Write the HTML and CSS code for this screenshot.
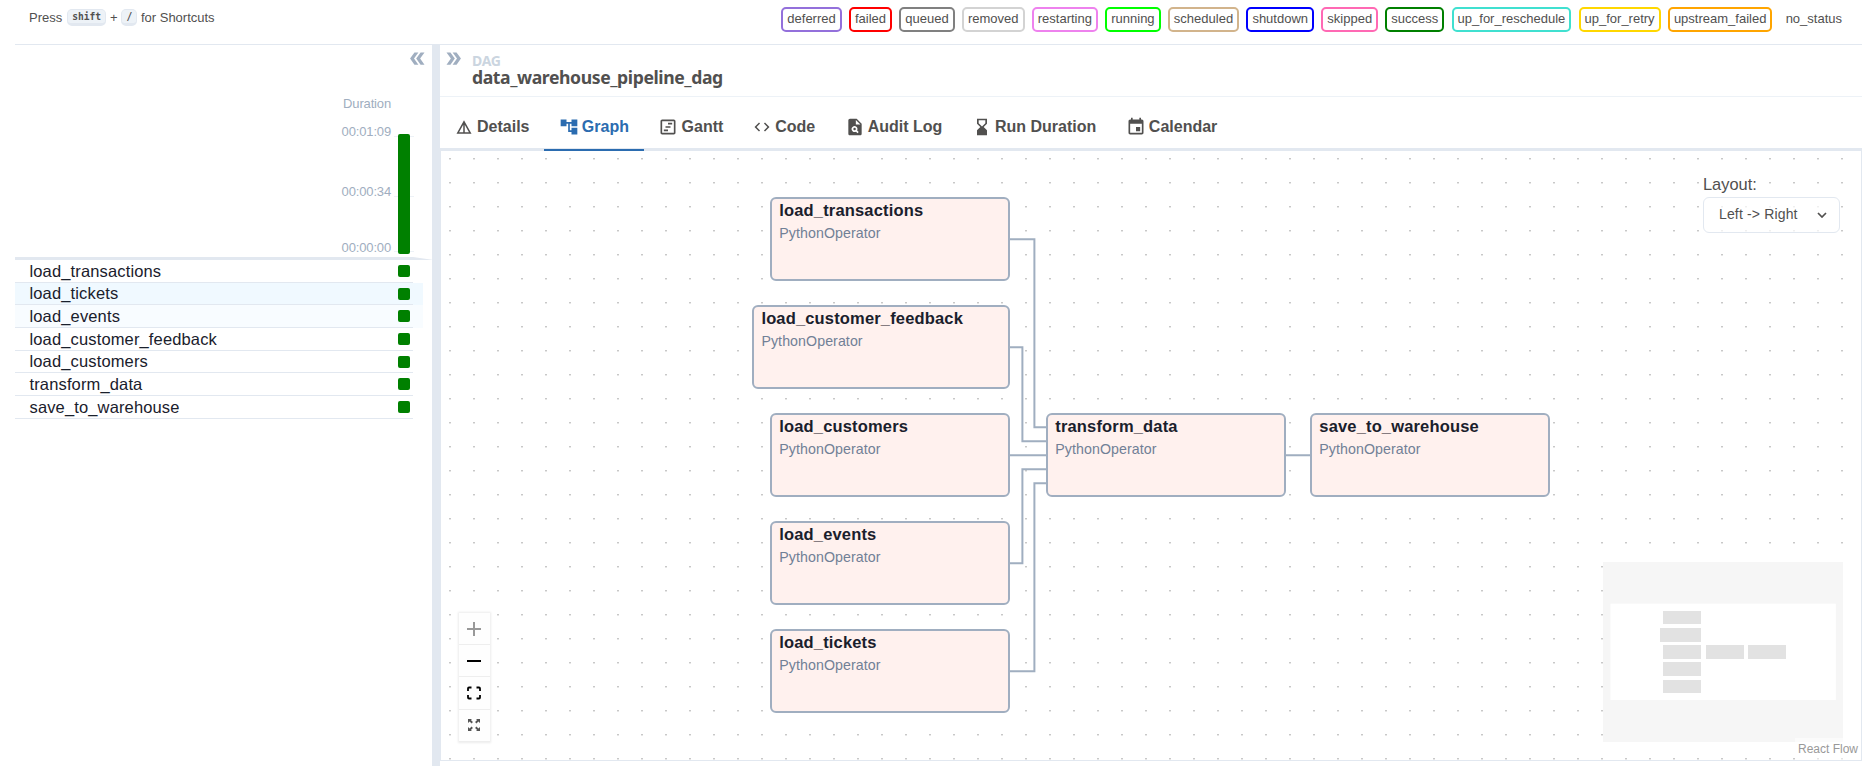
FILE: index.html
```html
<!DOCTYPE html>
<html lang="en">
<head>
<meta charset="utf-8">
<title>data_warehouse_pipeline_dag</title>
<link rel="stylesheet" href="styles.css">
</head>
<body>
<header class="topbar">
  <div class="shortcuts"><span class="press">Press</span><kbd>shift</kbd><span class="plus">+</span><kbd>/</kbd><span class="hint">for Shortcuts</span></div>
  <div class="legend">
    <span class="state deferred">deferred</span>
    <span class="state failed">failed</span>
    <span class="state queued">queued</span>
    <span class="state removed">removed</span>
    <span class="state restarting">restarting</span>
    <span class="state running">running</span>
    <span class="state scheduled">scheduled</span>
    <span class="state shutdown">shutdown</span>
    <span class="state skipped">skipped</span>
    <span class="state success">success</span>
    <span class="state reschedule">up_for_reschedule</span>
    <span class="state retry">up_for_retry</span>
    <span class="state upstream">upstream_failed</span>
    <span class="state none">no_status</span>
  </div>
</header>
<main class="main">
  <section class="grid-panel">
    <div class="collapse"><svg class="double flip" viewBox="0 0 24 24"><path d="M15.5 5H11l5 7-5 7h4.5l5-7zM8.5 5H4l5 7-5 7h4.5l5-7z"/></svg></div>
    <div class="durations">
      <div class="axis">
        <span class="axis-title">Duration</span>
        <span class="max">00:01:09</span>
        <span class="mid">00:00:34</span>
        <span class="min">00:00:00</span>
      </div>
      <div class="chart">
        <i class="tick t1"></i><i class="tick t2"></i><i class="tick t3"></i>
        <div class="bar"></div>
      </div>
    </div>
    <div class="rule"></div>
    <div class="tasks">
      <div class="task"><span>load_transactions</span><i></i></div>
      <div class="task hovered"><span>load_tickets</span><i></i></div>
      <div class="task fading"><span>load_events</span><i></i></div>
      <div class="task"><span>load_customer_feedback</span><i></i></div>
      <div class="task"><span>load_customers</span><i></i></div>
      <div class="task"><span>transform_data</span><i></i></div>
      <div class="task"><span>save_to_warehouse</span><i></i></div>
    </div>
  </section>
  <div class="splitter"></div>
  <section class="details">
    <div class="heading">
      <svg class="double" viewBox="0 0 24 24"><path d="M15.5 5H11l5 7-5 7h4.5l5-7zM8.5 5H4l5 7-5 7h4.5l5-7z"/></svg>
      <div class="heading-text"><span class="kind">DAG</span><span class="dag">data_warehouse_pipeline_dag</span></div>
    </div>
    <nav class="tabs">
      <a class="tab small"><svg viewBox="0 0 24 24"><path d="M12 3L2 21h20L12 3zm1 5.92L18.6 19H13V8.92zm-2 0V19H5.4L11 8.92z"/></svg>Details</a>
      <a class="tab active"><svg viewBox="0 0 24 24"><path d="M22 11V3h-7v3H9V3H2v8h7V8h2v10h4v3h7v-8h-7v3h-2V8h2v3z"/></svg>Graph</a>
      <a class="tab"><svg viewBox="0 0 24 24"><path d="M19 5v14H5V5h14m0-2H5c-1.1 0-2 .9-2 2v14c0 1.1.9 2 2 2h14c1.1 0 2-.9 2-2V5c0-1.1-.9-2-2-2zM7 15h5v2H7zm5-8h5v2h-5zm-3 4h6v2H9z"/></svg>Gantt</a>
      <a class="tab small"><svg viewBox="0 0 24 24"><path d="M9.4 16.6L4.8 12l4.6-4.6L8 6l-6 6 6 6 1.4-1.4zm5.2 0l4.6-4.6-4.6-4.6L16 6l6 6-6 6-1.4-1.4z"/></svg>Code</a>
      <a class="tab"><svg viewBox="0 0 24 24"><path fill-rule="evenodd" d="M14 2H6c-1.1 0-2 .9-2 2v16c0 1.1.89 2 1.99 2H18c1.1 0 2-.9 2-2V8l-6-6zm1.04 17.45l-1.88-1.88c-1.33.71-3.01.53-4.13-.59a3.5 3.5 0 0 1 0-4.95 3.5 3.5 0 0 1 4.95 0c1.12 1.12 1.31 2.8.59 4.13l1.88 1.88-1.41 1.41zM13 9V3.5L18.5 9H13zM11.5 13a1.5 1.5 0 1 0 0 3 1.5 1.5 0 0 0 0-3z"/></svg>Audit Log</a>
      <a class="tab"><svg viewBox="0 0 24 24"><path d="M18 22l-.01-6L14 12l3.99-4.01L18 2H6v6l4 4-4 3.99V22h12zM8 7.5V4h8v3.5l-4 4-4-4z"/></svg>Run Duration</a>
      <a class="tab"><svg viewBox="0 0 24 24"><path d="M17 12h-5v5h5v-5zM16 1v2H8V1H6v2H5c-1.11 0-1.99.9-1.99 2L3 19c0 1.1.89 2 2 2h14c1.1 0 2-.9 2-2V5c0-1.1-.9-2-2-2h-1V1h-2zm3 18H5V8h14v11z"/></svg>Calendar</a>
    </nav>
    <div class="canvas">
      <svg class="layer" width="1420" height="609">
        <defs><pattern id="dots" x="8" y="7" width="24" height="24" patternUnits="userSpaceOnUse"><rect width="2" height="1" fill="#c8c8c8"/><rect y="1" width="2" height="1" fill="#e6e6e6"/></pattern></defs>
        <rect width="1420" height="609" fill="url(#dots)"/>
      </svg>
      <div class="node n1"><b>load_transactions</b><span>PythonOperator</span></div>
      <div class="node n2"><b>load_customer_feedback</b><span>PythonOperator</span></div>
      <div class="node n3"><b>load_customers</b><span>PythonOperator</span></div>
      <div class="node n4"><b>load_events</b><span>PythonOperator</span></div>
      <div class="node n5"><b>load_tickets</b><span>PythonOperator</span></div>
      <div class="node n6"><b>transform_data</b><span>PythonOperator</span></div>
      <div class="node n7"><b>save_to_warehouse</b><span>PythonOperator</span></div>
      <svg class="layer edges" width="1420" height="609">
        <path d="M569 88.3H593.4V276.2H606M569 196.3H581.4V290.2H606M569 304.2H606M569 412.2H581.4V318.2H606M569 520.2H593.4V332.2H606M845 304.2H870"/>
      </svg>
      <div class="layout-picker">
        <label>Layout:</label>
        <div class="select"><span>Left -&gt; Right</span><svg viewBox="0 0 10 6"><path d="M1 1l4 4 4-4"/></svg></div>
      </div>
      <div class="controls">
        <button class="dim"><svg viewBox="0 0 14 14"><path d="M6 0h2v6h6v2H8v6H6V8H0V6h6z"/></svg></button>
        <button><svg viewBox="0 0 14 14"><path d="M0 6h14v2H0z"/></svg></button>
        <button><svg viewBox="0 0 14 14"><path class="line" d="M1 5V2.5Q1 1.5 2 1.5H4.5M9.5 1.5H12Q13 1.5 13 2.5V5M13 9V11.5Q13 12.5 12 12.5H9.5M4.5 12.5H2Q1 12.5 1 11.5V9"/></svg></button>
        <button class="soft"><svg viewBox="0 0 14 14"><path d="M1 1h4L3.9 2.1l2 2-1.3 1.3-2-2L1 5zM13 1H9l1.1 1.1-2 2 1.3 1.3 2-2L13 5zM1 13h4l-1.1-1.1 2-2-1.3-1.3-2 2L1 9zM13 13H9l1.1-1.1-2-2 1.3-1.3 2 2L13 9z"/></svg></button>
      </div>
      <svg class="minimap" width="240" height="180" viewBox="0 0 240 180">
        <rect width="240" height="180" fill="#f6f6f6"/>
        <rect x="7.5" y="41.7" width="225.3" height="96.3" fill="#fff"/>
        <g fill="#e2e2e2">
          <rect x="60" y="49" width="38" height="13"/><rect x="57" y="66" width="41" height="14"/>
          <rect x="60" y="83" width="38" height="14"/><rect x="60" y="100" width="38" height="14"/><rect x="60" y="118" width="38" height="13"/>
          <rect x="103" y="83" width="38" height="14"/><rect x="145" y="83" width="38" height="14"/>
        </g>
      </svg>
      <div class="attribution">React Flow</div>
    </div>
  </section>
</main>
</body>
</html>
```
FILE: styles.css
```css
* { box-sizing: border-box; }
body {
  margin: 0;
  height: 766px;
  padding: 0 13px 0 15px;
  overflow: hidden;
  background: #fff;
  color: #51504f;
  font-family: "Liberation Sans", Arial, sans-serif;
  font-size: 16px;
}
svg { display: block; fill: currentColor; }

.topbar {
  display: flex;
  justify-content: space-between;
  height: 45px;
  border-bottom: 1px solid #e2e8f0;
  font-size: 13px;
}
.shortcuts { display: flex; height: 18px; margin: 9px 0 0 14px; line-height: 18px; }
kbd {
  height: 17px;
  padding: 0 4.2px;
  border: 1px solid #e2e8f0;
  border-bottom-width: 3px;
  border-radius: 5px;
  background: #edf2f7;
  font: bold 9.6px/13px "DejaVu Sans Mono", monospace;
}
.press { width: 38px; }
.plus { width: 15px; text-align: center; }
.hint { margin-left: 3.5px; }
.legend { display: flex; gap: 7.25px; margin: 7px 14px 0 0; }
.state {
  height: 25px;
  padding: 0 4px;
  border: 2px solid;
  border-radius: 5px;
  color: #51504f;
  line-height: 19px;
}
.deferred { border-color: mediumpurple; }
.failed { border-color: red; }
.queued { border-color: gray; }
.removed { border-color: lightgrey; }
.restarting { border-color: violet; }
.running { border-color: lime; }
.scheduled { border-color: tan; }
.shutdown { border-color: blue; }
.skipped { border-color: hotpink; }
.success { border-color: green; }
.reschedule { border-color: turquoise; }
.retry { border-color: gold; }
.upstream { border-color: orange; }
.none { border-color: transparent; }

.main { display: flex; height: 721px; }
.grid-panel { width: 417px; }
.double { width: 21px; height: 21px; color: #a0aec0; }
.flip { transform: scaleX(-1); }
.collapse { display: flex; justify-content: flex-end; height: 47px; padding: 3px 4px 0 0; }
.durations { display: flex; justify-content: flex-end; height: 165px; padding-right: 18px; }
.axis {
  display: flex;
  flex-direction: column;
  width: 60px;
  padding: 4px 3px 0 0;
  text-align: right;
  color: #a0aec0;
  font-size: 13px;
  line-height: 15px;
  letter-spacing: -0.15px;
}
.max { margin-top: 13px; }
.mid { margin-top: 45px; }
.min { margin-top: 41px; }
.chart { position: relative; width: 20px; }
.tick { position: absolute; left: 0; width: 20px; height: 1px; background: #edf2f7; }
.t1 { top: 44px; }
.t2 { top: 104px; }
.t3 { top: 159px; }
.bar { position: relative; width: 12px; height: 120px; margin: 42px 0 0 4px; border-radius: 2px; background: green; }
.rule { height: 3px; background: #e2e8f0; clip-path: polygon(0 0, 398px 0, 100% 90%, 100% 100%, 398px 100%, 0 100%); }
.tasks { width: 398px; }
.task {
  display: flex;
  justify-content: space-between;
  height: 22.667px;
  padding: 5px 3px 0 14.5px;
  border-bottom: 1px solid #e2e8f0;
  color: #1a202c;
  font-size: 16.5px;
  letter-spacing: 0.14px;
}
.task span { line-height: 16px; margin-top: -2.2px; }
.task i { width: 12px; height: 12px; border-radius: 2px; background: green; }
.hovered { background: #f0f9ff; box-shadow: 10px 0 #f0f9ff; }
.fading { background: #f8fcff; box-shadow: 10px 0 #f8fcff; }

.splitter { width: 8px; margin-top: -1px; background: #e2e8f0; }
.details { display: flex; flex-direction: column; width: 1422px; }
.heading { display: flex; height: 52px; padding: 3px 0 0 3px; border-bottom: 1px solid #edf2f7; }
.heading-text {
  display: flex;
  flex-direction: column;
  margin-left: 8px;
  font-family: "Noto Sans", "Open Sans", sans-serif;
  font-weight: 700;
}
.kind { margin-top: 4.5px; color: #cbd5e0; font-size: 14px; line-height: 15px; letter-spacing: -0.3px; }
.dag { margin-top: -1px; font-size: 17.6px; line-height: 20px; letter-spacing: -0.4px; white-space: nowrap; }
.tabs { display: flex; height: 54px; border-bottom: 3px solid #e2e8f0; font-weight: 700; }
.tab {
  display: flex;
  align-items: center;
  gap: 3.2px;
  height: 54px;
  padding: 8px 14.7px 0;
  border-bottom: 2px solid transparent;
}
.tab svg { width: 20px; height: 20px; }
.tab.small { gap: 4.5px; }
.tab.small:first-child { padding: 8px 14.5px 0; }
.tab.small svg { width: 18px; height: 18px; }
.tab.active { color: #2b6cb0; border-color: #2b6cb0; }

.canvas { position: relative; height: 610px; border: solid #e2e8f0; border-width: 0 1px 1px; }
.layer { position: absolute; left: 0; top: 0; }
.edges path { fill: none; stroke: #a0aec0; stroke-width: 2; }
.node {
  position: absolute;
  left: 329.3px;
  width: 240px;
  height: 84px;
  padding: 3px 7px;
  border: 2px solid #a0aec0;
  border-radius: 6px;
  background: #fff1ee;
  white-space: nowrap;
}
.node b { display: block; color: #1a202c; font-size: 16.5px; line-height: 16px; letter-spacing: 0.16px; }
.node span { display: block; margin-top: 6px; color: #718096; font-size: 14.2px; line-height: 18px; letter-spacing: 0.08px; }
.n1 { top: 46.2px; }
.n2 { top: 154.2px; left: 311.4px; width: 258px; }
.n3 { top: 262.2px; }
.n4 { top: 370.2px; }
.n5 { top: 478.2px; }
.n6 { top: 262.2px; left: 605.3px; }
.n7 { top: 262.2px; left: 869.3px; }

.layout-picker { position: absolute; top: 25px; right: 21px; width: 137px; }
.layout-picker label { display: block; height: 21px; line-height: 17px; font-size: 16.4px; }
.select {
  display: flex;
  align-items: center;
  justify-content: space-between;
  height: 36px;
  padding: 0 12px 2px 15px;
  border: 1px solid #e2e8f0;
  border-radius: 6px;
  background: rgba(255, 255, 255, 0.7);
  font-size: 14px;
  letter-spacing: 0.15px;
}
.select svg { width: 10px; height: 6px; margin-top: 2px; fill: none; stroke: currentColor; stroke-width: 1.7; }

.controls { position: absolute; left: 18px; top: 462px; width: 31px; box-shadow: 0 0 2px 1px rgba(0, 0, 0, 0.08); }
.controls button {
  display: flex;
  align-items: center;
  justify-content: center;
  width: 31px;
  height: 32.2px;
  padding: 0 1px 0 0;
  border: 0;
  border-bottom: 1px solid #eee;
  background: #fefefe;
  color: #000;
}
.controls svg { width: 14px; height: 14px; }
.controls .line { fill: none; stroke: #000; stroke-width: 1.8; }
.controls .dim { color: #999; }
.controls .soft { color: #555; }
.minimap { position: absolute; left: 1162px; top: 411px; }
.attribution {
  position: absolute;
  right: 0;
  bottom: 0;
  height: 22px;
  padding: 3px 3px 0;
  background: rgba(255, 255, 255, 0.5);
  color: #999;
  font-size: 12px;
  line-height: 17px;
}
```
